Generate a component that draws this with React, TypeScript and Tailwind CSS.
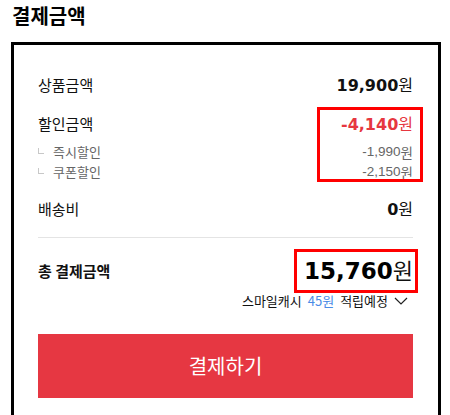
const kr = { fontFamily: '"Noto Sans CJK KR", "Noto Sans", sans-serif' }
const num = { fontFamily: '"DejaVu Sans", "Noto Sans CJK KR", sans-serif' }
const numThin = { fontFamily: '"Liberation Sans", "Noto Sans CJK KR", sans-serif' }

const Price = ({ value, className = '' }: { value: string; className?: string }) => (
  <span className={`flex items-baseline ${className}`}>
    <span className="font-bold text-[16px]" style={num}>
      {value}
    </span>
    <span className="text-[16px]" style={kr}>
      원
    </span>
  </span>
)

const SubRow = ({ label }: { label: string }) => (
  <div className="flex items-center h-[20px] text-[13px] text-[#666]">
    <span className="w-[6px] h-[6px] border-l border-b border-[#c8c8c8] mr-[9px] -mt-[2px]" />
    <span style={kr}>{label}</span>
  </div>
)

const SubValue = ({ value }: { value: string }) => (
  <div className="flex items-center justify-end h-[20px] text-[#666]">
    <span className="text-[13.5px]" style={numThin}>
      {value}
    </span>
    <span className="text-[13.5px]" style={kr}>
      원
    </span>
  </div>
)

export default function App() {
  return (
    <div className="w-[450px] h-[415px] overflow-hidden bg-white text-[#111]" style={kr}>
      <div className="h-[42px] pl-[12px] pt-[1px]">
        <h2 className="text-[20px] font-bold leading-[30px] text-black">결제금액</h2>
      </div>

      <div className="ml-[11px] w-[430px] border-[3px] border-black pl-[24px] pr-[25px] pt-[25px] pb-[40px]">
        <div className="flex items-center justify-between h-[30px] text-[15px]">
          <span>상품금액</span>
          <Price value="19,900" />
        </div>

        <div className="flex mt-[9px]">
          <div className="flex-1">
            <div className="flex items-center h-[30px] text-[15px]">
              <span>할인금액</span>
            </div>
            <div className="mt-[3px]">
              <SubRow label="즉시할인" />
              <SubRow label="쿠폰할인" />
            </div>
          </div>
          <div className="relative">
            <div className="flex items-center justify-end h-[30px]">
              <Price value="-4,140" className="text-[#e63740]" />
            </div>
            <div className="mt-[3px]">
              <SubValue value="-1,990" />
              <SubValue value="-2,150" />
            </div>
            <div className="absolute right-[-10px] top-[-2px] bottom-0 w-[106px] border-[3px] border-[#ff0000]" />
          </div>
        </div>

        <div className="flex items-center justify-between h-[30px] mt-[12px] text-[15px]">
          <span>배송비</span>
          <Price value="0" />
        </div>

        <div className="h-px bg-[#e4e4e4] mt-[13px]" />

        <div className="flex items-center justify-between h-[44px] mt-[11px]">
          <span className="text-[15px] font-bold">총 결제금액</span>
          <div className="relative h-full flex items-center">
            <span className="flex items-baseline">
              <span className="font-bold text-[23px] text-black" style={num}>
                15,760
              </span>
              <span className="text-[22px]" style={kr}>
                원
              </span>
            </span>
            <div className="absolute right-[-5px] top-0 bottom-0 w-[124px] border-[3px] border-[#ff0000]" />
          </div>
        </div>

        <div className="flex items-center justify-end h-[14px] text-[13px] mt-px">
          <span>스마일캐시</span>
          <span className="ml-[6px] text-[#4a8be6]">45원</span>
          <span className="ml-[6px]">적립예정</span>
          <svg width="14" height="8" viewBox="0 0 14 8" className="ml-[6px] mr-[5px]">
            <polyline points="1,1 7,7 13,1" fill="none" stroke="#222" strokeWidth="1.2" />
          </svg>
        </div>

        <button className="mt-[26px] w-full h-[64px] bg-[#e63742] text-white text-[20px] flex items-center justify-center">
          결제하기
        </button>
      </div>
    </div>
  )
}
